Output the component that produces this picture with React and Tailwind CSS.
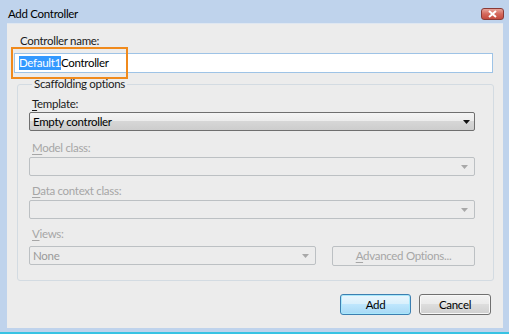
import React from 'react'

const font = { fontFamily: 'Lato, "Open Sans", sans-serif' }

const Key = ({ children }) => <span className="underline underline-offset-2">{children}</span>

const Arrow = ({ color }) => (
  <svg width="7" height="4" viewBox="0 0 7 4" className="shrink-0">
    <path d="M0 0h7L3.5 4z" fill={color} />
  </svg>
)

const DisabledSelect = ({ text, className = '' }) => (
  <div className={`h-[19px] border border-[#bcc0c3] rounded-[2px] flex items-center justify-between pl-[3px] pr-[6px] ${className}`}>
    <span className="text-[#9a9a9a]">{text}</span>
    <Arrow color="#a8a8a8" />
  </div>
)

export default function App() {
  return (
    <div
      className="w-[509px] h-[334px] bg-[#bfd3ec] flex flex-col pl-[7px] pr-[6px] pb-[4px] border-b-2 border-b-[#38c3e3] text-[11.5px] tracking-[-0.3px] text-[#1b1b1b] overflow-hidden"
      style={font}
    >
      <div className="h-[23px] flex items-center justify-between">
        <span className="text-black pl-[1px] mt-[4px]">Add Controller</span>
        <div className="w-[23px] h-[12px] -mr-[1px] mt-[4px] rounded-[3px] border border-[#8a3a36] bg-gradient-to-b from-[#e8a59c] via-[#d4685c] to-[#c44a3e] flex items-center justify-center">
          <svg width="9" height="8" viewBox="0 0 9 8">
            <path d="M1 1l7 6M8 1L1 7" stroke="#fff" strokeWidth="2" />
          </svg>
        </div>
      </div>

      <div className="flex-1 bg-[#ececec] border-t border-[#dfe7f1] flex flex-col">
        <div className="pl-[13px] mt-[10px] leading-[14px]">
          <Key>C</Key>ontroller name:
        </div>

        <div className="relative mt-[5px] ml-[7px] mr-[10px]">
          <div className="h-[20px] bg-white border border-[#9ec3e6] flex items-center pl-[4px]">
            <span className="bg-[#3399ff] text-white leading-[14px]">Default1</span>
            <span className="text-black">Controller</span>
          </div>
          <div className="absolute left-[-3px] top-[-6px] w-[117px] h-[32px] border-2 border-[#f08a1c] pointer-events-none" />
        </div>

        <fieldset className="mt-[4px] ml-[10px] mr-[9px] h-[204px] border border-[#d3dbe2] rounded-[3px] px-[11px]">
          <legend className="ml-[3px] px-[2px] leading-[14px]">Scaffolding options</legend>

          <div className="pl-[3px] mt-[6px] mr-[7px] leading-[14px]">
            <Key>T</Key>emplate:
          </div>
          <div className="mt-[1px] mr-[7px] h-[19px] border border-[#6f6f6f] rounded-[2px] bg-[linear-gradient(#f4f4f4_0%,#ececec_45%,#d6d6d6_50%,#cdcdcd_100%)] flex items-center justify-between pl-[3px] pr-[4px]">
            <span className="text-black">Empty controller</span>
            <Arrow color="#111" />
          </div>

          <div className="pl-[3px] mt-[10px] leading-[14px] text-[#a6a6a6]">
            <Key>M</Key>odel class:
          </div>
          <DisabledSelect text="" className="mt-[2px] mr-[7px]" />

          <div className="pl-[3px] mt-[8px] leading-[14px] text-[#a6a6a6]">
            <Key>D</Key>ata context class:
          </div>
          <DisabledSelect text="" className="mt-[2px] mr-[7px]" />

          <div className="pl-[3px] mt-[8px] leading-[14px] text-[#a6a6a6]">
            <Key>V</Key>iews:
          </div>
          <div className="mt-[5px] mr-[7px] flex gap-[16px]">
            <DisabledSelect text="None" className="w-[287px]" />
            <div className="flex-1 h-[20px] border border-[#bcc0c3] rounded-[2px] flex items-center justify-center text-[#a6a6a6]">
              <span>
                <Key>A</Key>dvanced Options...
              </span>
            </div>
          </div>
        </fieldset>

        <div className="mt-[13px] mr-[12px] flex justify-end gap-[8px]">
          <button className="w-[71px] h-[21px] rounded-[3px] border border-[#3c7fb1] bg-[linear-gradient(#eaf6fd_0%,#d9f0fc_45%,#bee6fd_50%,#a7d9f5_100%)] shadow-[inset_0_0_0_1px_#a8e8fb] text-black">
            Add
          </button>
          <button className="w-[72px] h-[21px] rounded-[3px] border border-[#707070] bg-[linear-gradient(#f2f2f2_0%,#ebebeb_45%,#dddddd_50%,#cfcfcf_100%)] shadow-[inset_0_0_0_1px_#f8f8f8] text-black">
            Cancel
          </button>
        </div>
      </div>
    </div>
  )
}
